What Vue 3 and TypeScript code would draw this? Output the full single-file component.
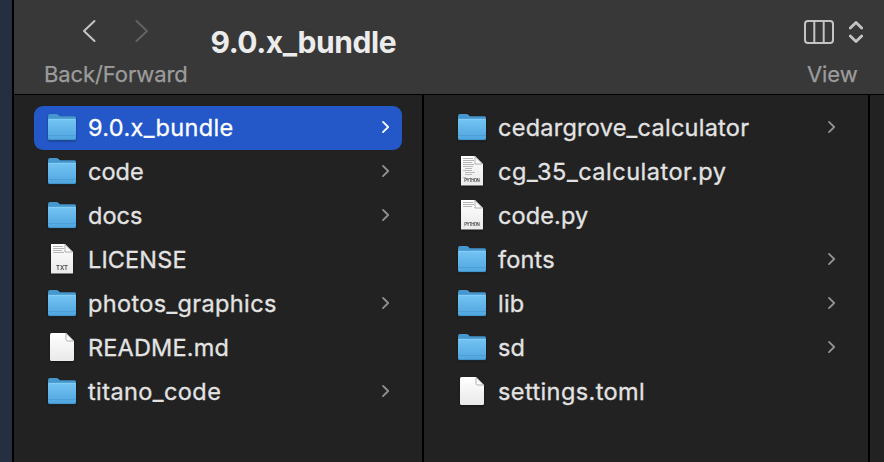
<script setup lang="ts">
type Kind = 'folder' | 'txt' | 'script' | 'scriptShort' | 'blank'

interface Entry {
  name: string
  kind: Kind
  tracking: number
  selected?: boolean
}

const columns: Entry[][] = [
  [
    { name: '9.0.x_bundle', kind: 'folder', tracking: 0.34, selected: true },
    { name: 'code', kind: 'folder', tracking: 0 },
    { name: 'docs', kind: 'folder', tracking: 0 },
    { name: 'LICENSE', kind: 'txt', tracking: 0.12 },
    { name: 'photos_graphics', kind: 'folder', tracking: 0.36 },
    { name: 'README.md', kind: 'blank', tracking: 0.16 },
    { name: 'titano_code', kind: 'folder', tracking: 0.42 },
  ],
  [
    { name: 'cedargrove_calculator', kind: 'folder', tracking: 0.25 },
    { name: 'cg_35_calculator.py', kind: 'script', tracking: 0.52 },
    { name: 'code.py', kind: 'scriptShort', tracking: 0.1 },
    { name: 'fonts', kind: 'folder', tracking: 0.2 },
    { name: 'lib', kind: 'folder', tracking: 0.2 },
    { name: 'sd', kind: 'folder', tracking: 0 },
    { name: 'settings.toml', kind: 'blank', tracking: 0.4 },
  ],
]
</script>

<template>
  <div class="screen">
    <svg class="defs" width="0" height="0" aria-hidden="true">
      <defs>
        <linearGradient id="folderFront" x1="0" y1="0" x2="0" y2="1">
          <stop offset="0" stop-color="#74c4f3" />
          <stop offset="1" stop-color="#4fa5df" />
        </linearGradient>
        <linearGradient id="paper" x1="0" y1="0" x2="0" y2="1">
          <stop offset="0" stop-color="#ffffff" />
          <stop offset="1" stop-color="#e9e9e9" />
        </linearGradient>
      </defs>
    </svg>

    <main class="window">
      <header class="toolbar">
        <div class="nav">
          <div class="arrows">
            <svg width="16" height="24" viewBox="0 0 16 24"><path d="M12.500 2 2 12l10.500 10" /></svg>
            <svg class="dim" width="16" height="24" viewBox="0 0 16 24"><path d="M2.500 2 13 12 2.500 22" /></svg>
          </div>
          <span class="caption back">Back/Forward</span>
        </div>
        <h1 class="title">9.0.x_bundle</h1>
        <div class="view">
          <div class="switcher">
            <svg width="30" height="24" viewBox="0 0 30 24">
              <rect x="1" y="1" width="28" height="22" rx="3" />
              <path d="M10.300 1v22M19.700 1v22" />
            </svg>
            <svg class="updown" width="16" height="24" viewBox="0 0 16 24">
              <path d="M2.300 8 8 2.500 13.700 8M2.300 16 8 21.500l5.700-5.500" />
            </svg>
          </div>
          <span class="caption view-label">View</span>
        </div>
      </header>

      <div class="browser">
        <ul v-for="(entries, c) in columns" :key="c" class="column">
          <li v-for="e in entries" :key="e.name" class="row" :class="{ selected: e.selected }">
            <svg v-if="e.kind === 'folder'" class="icon" width="30" height="30" viewBox="0 0 30 30">
              <path d="M1 4.200Q1 2 3 2h6.500q1 0 1.800.8L13 4.200h14.500Q29 4.200 29 6v4H1z" fill="#4697cd" />
              <path d="M1 7.800Q1 7 2 7h26q1 0 1 .8V26q0 2-1.600 2H2.600Q1 28 1 26z" fill="url(#folderFront)" />
              <path d="M1.500 7.300h27" stroke="#8bd3fa" stroke-width=".8" />
              <path d="M1 23.500h28" stroke="#3d8dc5" stroke-width=".8" opacity=".5" />
              <path d="M1.500 27.700h27" stroke="#3b88ba" stroke-width=".7" />
            </svg>
            <svg v-else class="icon" width="30" height="30" viewBox="0 0 30 30">
              <template v-if="e.kind === 'blank'">
                <path d="M4.500 1H19l8 8v18.500q0 1.500-1.500 1.500h-21Q3 29 3 27.500v-25Q3 1 4.500 1z" fill="url(#paper)" />
                <path d="M19 1.300v6.200Q19 9 20.500 9h6.200z" fill="#fff" stroke="#a4a4a4" stroke-width=".9" />
              </template>
              <template v-else>
                <path d="M4 0h14l8 8v21.500H4z" fill="url(#paper)" />
                <path d="M18 .5V8h7.500z" fill="#fff" stroke="#a4a4a4" stroke-width=".9" />
                <path d="M6 2.500h10M6 4.500h11M6 6.500h9" stroke="#b5b5b5" stroke-width="1" />
                <path v-if="e.kind !== 'scriptShort'" d="M6 8.500h11" stroke="#b5b5b5" stroke-width="1" />
                <path
                  v-if="e.kind === 'script'"
                  d="M6 10.500h10M8 12.500h7M6 14.500h9M8 16.500h10M8 18.500h7M6 21.500h3"
                  stroke="#b9b9b9"
                  stroke-width="1"
                />
                <text v-if="e.kind === 'txt'" class="tag" x="15" y="26.200" font-size="6" textLength="12">TXT</text>
                <text v-else class="tag" x="15" y="26.300" font-size="4.300" textLength="15.500">PYTHON</text>
              </template>
            </svg>
            <span class="name" :style="{ letterSpacing: e.tracking + 'px' }">{{ e.name }}</span>
            <svg v-if="e.kind === 'folder'" class="chevron" width="10" height="14" viewBox="0 0 10 14">
              <path d="M2 1.900 7.200 7 2 12.100" />
            </svg>
          </li>
        </ul>
        <div class="column rest"></div>
      </div>
    </main>
  </div>
</template>

<style>
body {
  margin: 0;
  overflow: hidden;
  background: #222222;
}
</style>

<style scoped>
.screen {
  box-sizing: border-box;
  width: 884px;
  height: 462px;
  padding-left: 12px;
  background: #243040;
  font-family: Inter, 'Liberation Sans', sans-serif;
  overflow: hidden;
}
.defs {
  position: absolute;
}
.window {
  display: flex;
  flex-direction: column;
  box-sizing: border-box;
  height: 462px;
  border-left: 2px solid #000;
  background: #222;
}
.toolbar {
  display: flex;
  box-sizing: border-box;
  height: 95px;
  flex: none;
  padding: 0 20px 0 30px;
  border-bottom: 1px solid #000;
  background: #383838;
}
.nav {
  width: 166.500px;
}
.arrows {
  display: flex;
  gap: 36px;
  padding: 19px 0 0 38px;
}
.arrows svg,
.switcher svg,
.chevron {
  display: block;
  fill: none;
  stroke: #c4c4c4;
  stroke-width: 2;
  stroke-linecap: round;
  stroke-linejoin: round;
}
.arrows .dim {
  stroke: #626262;
}
.caption {
  display: block;
  font-size: 22px;
  line-height: 28px;
  letter-spacing: -0.1px;
  color: #9c9c9c;
  -webkit-text-stroke: 0.25px currentColor;
  white-space: nowrap;
}
.back {
  margin-top: 17px;
}
.title {
  margin: 0;
  padding-top: 24px;
  font-size: 30px;
  line-height: 36px;
  font-weight: 700;
  letter-spacing: -0.45px;
  color: #ececec;
  white-space: nowrap;
}
.view {
  margin-left: auto;
  width: 60px;
}
.switcher {
  display: flex;
  gap: 14px;
  padding-top: 20px;
}
.switcher svg {
  flex: none;
}
.switcher .updown {
  stroke-width: 2.8;
}
.view-label {
  margin: 16px 0 0 3px;
}
.browser {
  display: flex;
  flex: 1;
}
.column {
  box-sizing: border-box;
  width: 410px;
  margin: 0;
  padding: 11px 20px 0;
  list-style: none;
  border-right: 2px solid #000;
}
.column + .column {
  width: 446px;
}
.column.rest {
  flex: 1;
  width: auto;
  padding: 0;
  border: 0;
}
.row {
  display: flex;
  align-items: center;
  box-sizing: border-box;
  height: 44px;
  padding: 0 11px 2px 13px;
  border-radius: 9px;
  color: #e3e3e3;
}
.icon {
  display: block;
  flex: none;
  margin-right: 11px;
  filter: drop-shadow(0 1px 1px rgba(0, 0, 0, 0.4));
}
.name {
  padding-top: 1px;
  font-size: 23.5px;
  line-height: 30px;
  -webkit-text-stroke: 0.3px currentColor;
  white-space: nowrap;
}
.chevron {
  flex: none;
  margin-left: auto;
  stroke: #929292;
  stroke-width: 1.8;
}
.selected {
  background: #2458c9;
  color: #fff;
}
.selected .chevron {
  stroke: #fff;
}
.tag {
  font-weight: 600;
  fill: #444;
  text-anchor: middle;
}
</style>
